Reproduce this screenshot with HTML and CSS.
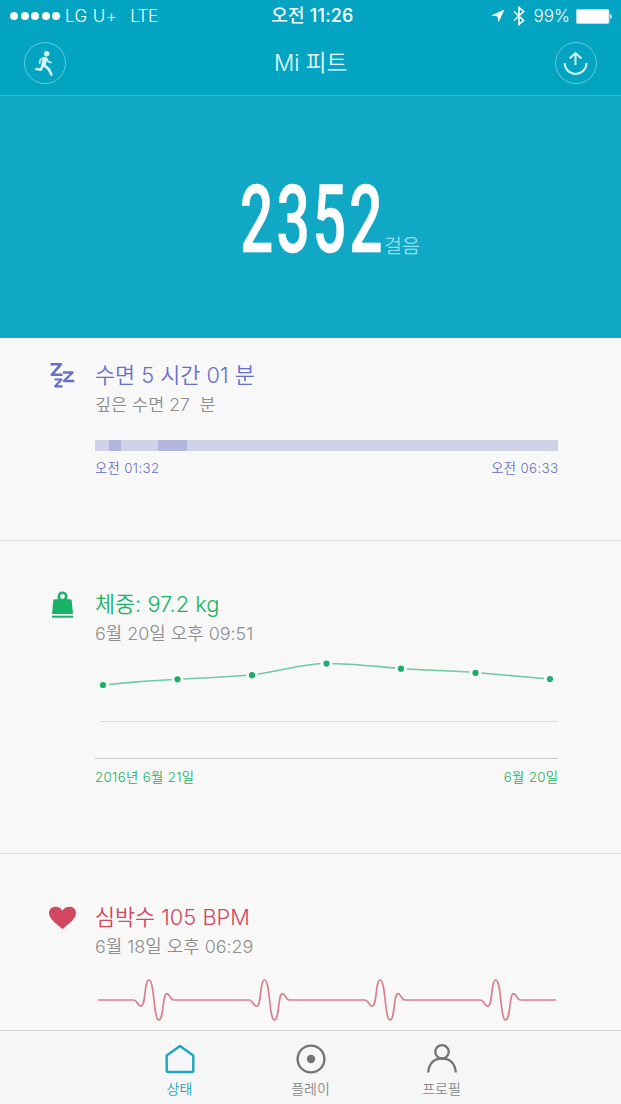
FILE: index.html
```html
<!DOCTYPE html>
<html lang="ko">
<head>
  <meta charset="UTF-8" />
  <meta name="viewport" content="width=device-width, initial-scale=1.0"/>
  <title>Mi 피트</title>
  <link rel="stylesheet" href="styles.css">
</head>
<body>

  <header>
    <div class="status-bar">
      <div class="carrier">
        <span class="signal"><i></i><i></i><i></i><i></i><i></i></span>
        <span class="operator">LG U+</span>
        <span class="network">LTE</span>
      </div>
      <div class="clock">오전 11:26</div>
      <div class="indicators">
        <svg class="location" width="14" height="14" viewBox="0 0 14 14"><path d="M13.5 .5L.3 6.400l6.200 1 1 6z" fill="#fff"/></svg>
        <svg class="bluetooth" width="12" height="20" viewBox="0 0 12 20"><path d="M1 5.500l9.600 9L6 18.500v-17l4.600 4L1 14.500" fill="none" stroke="#fff" stroke-width="1.600"/></svg>
        <span class="percent">99%</span>
        <svg class="battery" width="36" height="15" viewBox="0 0 36 15"><rect width="33.500" height="15" rx="2" fill="#fff" opacity=".65"/><rect x="1" y="1" width="31.500" height="13" rx="1" fill="#fff"/><path d="M34 5q2 .6 2 2.500t-2 2.500z" fill="#fff" opacity=".8"/></svg>
      </div>
    </div>
    <nav>
      <a class="round-btn" href="#">
        <svg width="42" height="42" viewBox="0 0 42 42" fill="none" stroke="#d3f4f9" stroke-linecap="round" stroke-linejoin="round">
          <circle cx="22.700" cy="11.800" r="2.700" fill="#d3f4f9" stroke="none"/>
          <path d="M20.800 17l-1.300 6" stroke-width="4.500"/>
          <path d="M19.500 16l-3.300 1.800-.6 3.400M22.600 16.500l1.800 3.200 2.700.8" stroke-width="1.600"/>
          <path d="M20.500 23.500l4.300 3.700 2.500 5.300" stroke-width="2.700"/>
          <path d="M18.500 24l-1.700 3.800-4.300-.7" stroke-width="2.500"/>
        </svg>
      </a>
      <h1>Mi 피트</h1>
      <a class="round-btn" href="#">
        <svg width="42" height="42" viewBox="0 0 42 42" fill="none" stroke="#d3f4f9" stroke-width="2">
          <path d="M20.500 23V11.500M14.600 16.500l5.900-5.500 5.900 5.500"/>
          <path d="M9.700 21a10.900 10.900 0 0 0 21.800 0"/>
        </svg>
      </a>
    </nav>
  </header>

  <div class="steps">
    <span class="count">2352</span><span class="unit">걸음</span>
  </div>

  <main>
    <section class="card sleep">
      <svg class="card-icon" width="27" height="30" viewBox="0 0 27 30" fill="none" stroke="#6770c8" stroke-linejoin="round">
        <path d="M1.500 4.200h10.500L2.800 14.800H13.500" stroke-width="2.600"/>
        <path d="M14 12.500h9.500L15 21h10.300" stroke-width="2.400"/>
        <path d="M5.500 19.500h7L6.200 26.300H13.500" stroke-width="2.200"/>
      </svg>
      <div class="card-body">
        <h2>수면 5 시간 01 분</h2>
        <p class="tight">깊은 수면 27 &nbsp;분</p>
        <div class="sleep-bar">
          <span class="deep first"></span>
          <span class="deep second"></span>
        </div>
        <div class="range"><span class="start">오전 01:32</span><span class="end">오전 06:33</span></div>
      </div>
    </section>

    <section class="card weight">
      <svg class="card-icon" width="27" height="30" viewBox="0 0 27 30">
        <path d="M5.800 10.300h2.800V7.300a4.900 4.900 0 0 1 9.800 0v3h2.800q1.300 0 1.500 1.200L24 25H3L4.300 11.500q.2-1.200 1.500-1.200z" fill="#18b366"/>
        <circle cx="13.500" cy="7.500" r="2.400" fill="#f8f8f8"/>
        <path d="M3 27.700h21" stroke="#18b366" stroke-width="2"/>
      </svg>
      <div class="card-body">
        <h2>체중: 97.2 kg</h2>
        <p>6월 20일 오후 09:51</p>
        <!-- last seven measurements -->
        <svg class="weight-chart" width="463" height="118" viewBox="95 645 463 118">
          <path d="M103 685Q140 681 177.500 679.300T252 675C282 671 302 663.500 326.500 663.500S376 666.500 401 668.500S450 670.500 475.500 672.500S525 677 550 679" fill="none" stroke="#6fcaa0" stroke-width="1.600"/>
          <g fill="#1fad6b" stroke="#f8f8f8" stroke-width="6" paint-order="stroke">
            <circle cx="103" cy="685" r="3.100"/>
            <circle cx="177.500" cy="679.300" r="3.100"/>
            <circle cx="252" cy="675.200" r="3.100"/>
            <circle cx="326.500" cy="663.600" r="3.100"/>
            <circle cx="401" cy="668.700" r="3.100"/>
            <circle cx="475.500" cy="672.900" r="3.100"/>
            <circle cx="550" cy="679" r="3.100"/>
          </g>
          <path d="M100 721.500h457.500" stroke="#d9d9d9"/>
          <path d="M95 758.500h463" stroke="#cbcbcb"/>
        </svg>
        <div class="range"><span class="start">2016년 6월 21일</span><span class="end">6월 20일</span></div>
      </div>
    </section>

    <section class="card heart">
      <svg class="card-icon" width="27" height="30" viewBox="0 0 27 30"><path d="M13.500 27.200C9 22.800 0 17.500 0 11C0 7.400 2.800 4.800 6.400 4.800c3.300 0 5.700 1.600 7.100 4 1.400-2.400 3.800-4 7.100-4C24.200 4.800 27 7.400 27 11 27 17.500 18 22.800 13.500 27.200z" fill="#d1485f"/></svg>
      <div class="card-body">
        <h2>심박수 105 BPM</h2>
        <p>6월 18일 오후 06:29</p>
        <svg class="pulse" width="463" height="72" viewBox="95 958 463 72">
          <path d="M98 1000h35.500c4 0 4 6.200 7.500 6.200c5 0 3-26.200 8-26.200c5.500 0 4.500 40 9.800 40c5 0 3.500-26.300 8-26.300c3 0 3.200 6.300 6.700 6.300h75.600c4 0 4 6.200 7.500 6.200c5 0 3-26.200 8-26.200c5.500 0 4.500 40 9.800 40c5 0 3.500-26.300 8-26.300c3 0 3.200 6.300 6.700 6.300h75.600c4 0 4 6.200 7.500 6.200c5 0 3-26.200 8-26.200c5.500 0 4.500 40 9.800 40c5 0 3.500-26.300 8-26.300c3 0 3.200 6.300 6.700 6.300h75.600c4 0 4 6.200 7.500 6.200c5 0 3-26.200 8-26.200c5.500 0 4.500 40 9.800 40c5 0 3.500-26.300 8-26.300c3 0 3.200 6.300 6.700 6.300H556" fill="none" stroke="#d9808f" stroke-width="1.700"/>
        </svg>
      </div>
    </section>
  </main>

  <footer>
    <a class="tab active" href="#">
      <svg width="32" height="32" viewBox="0 0 32 32"><path d="M2.700 12.500L16 3l13.300 9.500V27.500q0 1.500-1.500 1.500h-23.600Q2.700 29 2.700 27.500z" fill="none" stroke="currentColor" stroke-width="2.400" stroke-linejoin="round"/></svg>
      <span>상태</span>
    </a>
    <a class="tab" href="#">
      <svg width="32" height="32" viewBox="0 0 32 32"><circle cx="16" cy="16" r="13.400" fill="none" stroke="#747474" stroke-width="2.400"/><circle cx="16" cy="16" r="4.200" fill="#747474"/></svg>
      <span>플레이</span>
    </a>
    <a class="tab" href="#">
      <svg width="32" height="32" viewBox="0 0 32 32" fill="none" stroke="#747474" stroke-width="2.300"><circle cx="16" cy="8.800" r="6.700"/><path d="M2.200 29.500C3 20 8.500 15.500 16 15.500S29 20 29.800 29.500"/></svg>
      <span>프로필</span>
    </a>
  </footer>

</body>
</html>
```
FILE: styles.css
```css
* {
  margin: 0;
  padding: 0;
  box-sizing: border-box;
}
body {
  width: 621px;
  height: 1104px;
  overflow: hidden;
  display: flex;
  flex-direction: column;
  background: #f8f8f8;
  font-family: Inter, "Noto Sans CJK KR", sans-serif;
  font-weight: 350;
}
a {
  text-decoration: none;
}
svg {
  display: block;
  flex: none;
}

/* header */
header {
  height: 96px;
  background: #02a4c2;
  border-bottom: 1px solid #3cb9cf;
  color: #fff;
}
.status-bar {
  height: 31px;
  padding: 1px 9px 0 10px;
  display: grid;
  grid-template-columns: 1fr auto 1fr;
  align-items: center;
  font-size: 17px;
  font-weight: 300;
  line-height: 30px;
  white-space: nowrap;
}
.carrier,
.indicators {
  display: flex;
  align-items: center;
}
.indicators {
  justify-content: flex-end;
}
.signal {
  display: flex;
  gap: 2.5px;
  margin-right: 5px;
}
.signal i {
  width: 8px;
  height: 8px;
  border-radius: 50%;
  background: #fff;
}
.operator {
  margin-right: 13px;
  letter-spacing: .4px;
}
.network {
  letter-spacing: -.5px;
}
.clock {
  font-size: 18px;
  font-weight: 500;
  letter-spacing: .2px;
  padding-left: 3px;
}
.location {
  margin-right: 8px;
}
.bluetooth {
  margin-right: 9px;
}
.percent {
  margin-right: 6px;
}
nav {
  height: 64px;
  padding: 0 24px;
  display: flex;
  align-items: center;
  justify-content: space-between;
}
nav h1 {
  font-size: 22.5px;
  font-weight: 350;
  line-height: 32px;
  color: #e9fbff;
}
.round-btn {
  width: 42px;
  height: 42px;
  border-radius: 50%;
  box-shadow: inset 0 0 0 1px #5cc8dc;
}

/* step counter */
.steps {
  height: 242px;
  background: #11a8c5;
  padding: 79px 0 0 240px;
  display: flex;
  color: #fff;
}
.count {
  width: 144px;
  height: 90px;
  font-family: Roboto, sans-serif;
  font-size: 95px;
  font-weight: 500;
  letter-spacing: 5px;
  line-height: 90px;
  -webkit-text-stroke: .6px #fff;
  transform: scaleX(.617);
  transform-origin: 0 0;
}
.unit {
  font-size: 19.5px;
  line-height: 28px;
  margin-top: 57px;
  color: #8be0ee;
}

/* cards */
main {
  height: 692px;
}
.card {
  display: flex;
  padding: 48px 63px 0 49px;
  border-bottom: 1px solid #dcdcdc;
}
.card-icon {
  margin-right: 19px;
}
.card-body {
  width: 463px;
  white-space: nowrap;
}
.card h2 {
  font-size: 21.8px;
  font-weight: 350;
  line-height: 31px;
  height: 32px;
}
.card p {
  font-size: 17.9px;
  line-height: 25px;
  height: 24px;
  color: #8e8e8e;
}
.card .tight {
  font-size: 17.5px;
}
.range {
  display: flex;
  justify-content: space-between;
  font-size: 13.3px;
  font-weight: 350;
  letter-spacing: .35px;
  line-height: 18px;
}
.end {
  margin-right: -.35px;
}
.sleep {
  height: 203px;
  padding-top: 22px;
  color: #6770c8;
}
.sleep-bar {
  display: flex;
  height: 11px;
  margin: 24px 0 8px;
  background: #d0d3e8;
}
.deep {
  background: #b2b6db;
}
.first {
  width: 12px;
  margin-left: 14px;
}
.second {
  width: 29px;
  margin-left: 37px;
}
.weight {
  height: 313px;
  color: #18b366;
}
.weight-chart {
  margin-bottom: 5px;
}
.heart {
  height: 176px;
  border-bottom: none;
  color: #d1485f;
}

/* tab bar */
footer {
  height: 74px;
  padding: 12px 0 0 114px;
  display: flex;
  border-top: 1px solid #cfcfcf;
  background: #f6f6f6;
}
.tab {
  width: 131px;
  display: flex;
  flex-direction: column;
  align-items: center;
  font-size: 14px;
  line-height: 28px;
  color: #8a8a8a;
}
.active {
  color: #1aa7c0;
}
```
